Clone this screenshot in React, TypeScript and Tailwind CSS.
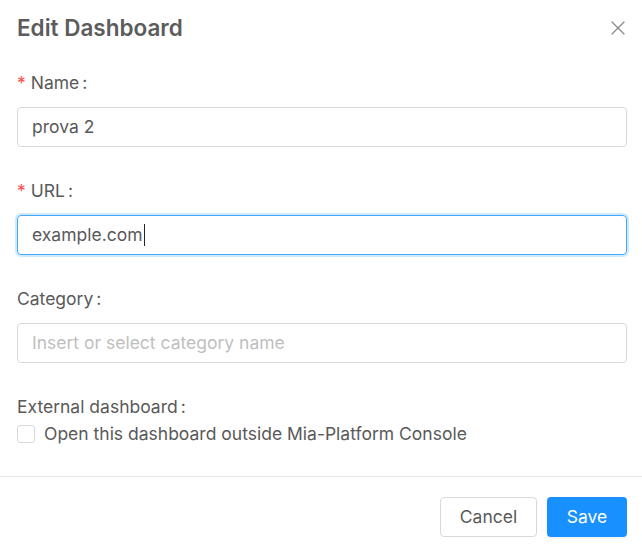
import React from "react";

const font = { fontFamily: "Inter, 'Noto Sans', sans-serif" };

function Label({ text, required }: { text: string; required?: boolean }) {
  return (
    <div className="flex items-center h-6 text-[17.5px] leading-6 text-[#595959] mb-3">
      {required && <span className="text-[#ff4d4f] mr-[5px] text-[17.5px]">*</span>}
      <span>{text}</span>
      <span className="ml-[3px] mr-2">:</span>
    </div>
  );
}

export default function App() {
  return (
    <div className="w-[642px] h-[554px] bg-white flex flex-col" style={font}>
      <div className="flex items-center justify-between pl-[17px] pr-[16px] pt-[16px] h-[40px]">
        <h1 className="text-[22.5px] font-semibold text-[#5c5c5c] leading-6">Edit Dashboard</h1>
        <svg width="16" height="16" viewBox="0 0 16 16" className="text-[#8c8c8c]">
          <path d="M2 2 L14 14 M14 2 L2 14" stroke="currentColor" strokeWidth="1.4" strokeLinecap="round" />
        </svg>
      </div>
      <div className="flex flex-col px-[17px] pt-[31px] pr-[15px]">
        <Label text="Name" required />
        <div className="h-[40px] border border-[#d9d9d9] rounded-[4px] flex items-center px-[14px] text-[17.5px] text-[#595959]">
          prova 2
        </div>
        <div className="h-[32px]" />
        <Label text="URL" required />
        <div className="h-[40px] border border-[#40a9ff] rounded-[4px] flex items-center px-[14px] text-[17.5px] text-[#595959] shadow-[0_0_0_2px_rgba(24,144,255,0.2)]">
          example.com
          <span className="inline-block w-px h-[22px] bg-[#262626] ml-px" />
        </div>
        <div className="h-[32px]" />
        <Label text="Category" />
        <div className="h-[40px] border border-[#d9d9d9] rounded-[4px] flex items-center px-[14px] text-[17.5px] text-[#bfbfbf]">
          Insert or select category name
        </div>
        <div className="h-[32px]" />
        <Label text="External dashboard" />
        <div className="flex items-center h-6 -mt-[9px] text-[17.5px] text-[#595959]">
          <span className="w-[18px] h-[18px] border border-[#d9d9d9] rounded-[3px] bg-white mr-[9px]" />
          <span>Open this dashboard outside Mia-Platform Console</span>
        </div>
      </div>
      <div className="mt-[30px] border-t border-[#e8e8e8]" />
      <div className="flex justify-end gap-[10px] pr-[15px] pt-[20px]">
        <button className="h-[40px] w-[97px] border border-[#d9d9d9] rounded-[4px] text-[17.5px] text-[#595959] bg-white">
          Cancel
        </button>
        <button className="h-[40px] w-[80px] rounded-[4px] text-[17.5px] text-white bg-[#1890ff] shadow-[0_2px_0_rgba(0,0,0,0.045)]">
          Save
        </button>
      </div>
    </div>
  );
}
